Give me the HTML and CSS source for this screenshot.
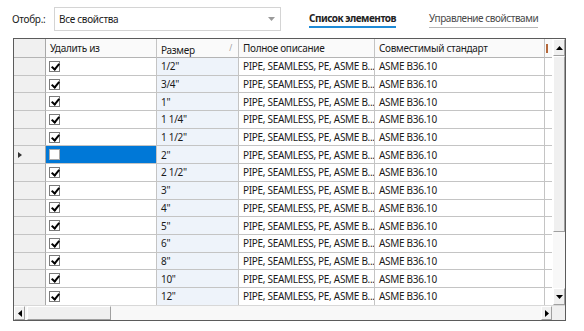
FILE: index.html
```html
<!DOCTYPE html>
<html lang="ru">
<head>
<meta charset="utf-8">
<link rel="stylesheet" href="styles.css">
</head>
<body>
<div class="top">
  <span class="lbl">Отобр.:</span>
  <div class="combo">
    <span>Все свойства</span>
    <svg class="drop" width="7" height="4" viewBox="0 0 7 4"><path d="M0 0h7L3.5 4z" fill="#9a9a9a"/></svg>
  </div>
  <nav class="tabs">
    <span class="tab active">Список элементов</span>
    <span class="tab">Управление свойствами</span>
  </nav>
</div>

<div class="grid">
  <div class="main">
    <div class="table">
      <div class="row head">
        <div class="c rh"></div>
        <div class="c">Удалить из</div>
        <div class="c size">Размер<span class="sort">/</span></div>
        <div class="c">Полное описание</div>
        <div class="c">Совместимый стандарт</div>
        <div class="c extra"><span class="mark"></span></div>
      </div>
      <div class="row"><div class="c rh"></div><div class="c"><span class="cb on"></span></div><div class="c size">1/2"</div><div class="c">PIPE, SEAMLESS, PE, ASME B...</div><div class="c">ASME B36.10</div><div class="c extra"></div></div>
      <div class="row"><div class="c rh"></div><div class="c"><span class="cb on"></span></div><div class="c size">3/4"</div><div class="c">PIPE, SEAMLESS, PE, ASME B...</div><div class="c">ASME B36.10</div><div class="c extra"></div></div>
      <div class="row"><div class="c rh"></div><div class="c"><span class="cb on"></span></div><div class="c size">1"</div><div class="c">PIPE, SEAMLESS, PE, ASME B...</div><div class="c">ASME B36.10</div><div class="c extra"></div></div>
      <div class="row"><div class="c rh"></div><div class="c"><span class="cb on"></span></div><div class="c size">1 1/4"</div><div class="c">PIPE, SEAMLESS, PE, ASME B...</div><div class="c">ASME B36.10</div><div class="c extra"></div></div>
      <div class="row"><div class="c rh"></div><div class="c"><span class="cb on"></span></div><div class="c size">1 1/2"</div><div class="c">PIPE, SEAMLESS, PE, ASME B...</div><div class="c">ASME B36.10</div><div class="c extra"></div></div>
      <div class="row"><div class="c rh"><span class="cur"></span></div><div class="c sel"><span class="cb"></span></div><div class="c size">2"</div><div class="c">PIPE, SEAMLESS, PE, ASME B...</div><div class="c">ASME B36.10</div><div class="c extra"></div></div>
      <div class="row"><div class="c rh"></div><div class="c"><span class="cb on"></span></div><div class="c size">2 1/2"</div><div class="c">PIPE, SEAMLESS, PE, ASME B...</div><div class="c">ASME B36.10</div><div class="c extra"></div></div>
      <div class="row"><div class="c rh"></div><div class="c"><span class="cb on"></span></div><div class="c size">3"</div><div class="c">PIPE, SEAMLESS, PE, ASME B...</div><div class="c">ASME B36.10</div><div class="c extra"></div></div>
      <div class="row"><div class="c rh"></div><div class="c"><span class="cb on"></span></div><div class="c size">4"</div><div class="c">PIPE, SEAMLESS, PE, ASME B...</div><div class="c">ASME B36.10</div><div class="c extra"></div></div>
      <div class="row"><div class="c rh"></div><div class="c"><span class="cb on"></span></div><div class="c size">5"</div><div class="c">PIPE, SEAMLESS, PE, ASME B...</div><div class="c">ASME B36.10</div><div class="c extra"></div></div>
      <div class="row"><div class="c rh"></div><div class="c"><span class="cb on"></span></div><div class="c size">6"</div><div class="c">PIPE, SEAMLESS, PE, ASME B...</div><div class="c">ASME B36.10</div><div class="c extra"></div></div>
      <div class="row"><div class="c rh"></div><div class="c"><span class="cb on"></span></div><div class="c size">8"</div><div class="c">PIPE, SEAMLESS, PE, ASME B...</div><div class="c">ASME B36.10</div><div class="c extra"></div></div>
      <div class="row"><div class="c rh"></div><div class="c"><span class="cb on"></span></div><div class="c size">10"</div><div class="c">PIPE, SEAMLESS, PE, ASME B...</div><div class="c">ASME B36.10</div><div class="c extra"></div></div>
      <div class="row"><div class="c rh"></div><div class="c"><span class="cb on"></span></div><div class="c size">12"</div><div class="c">PIPE, SEAMLESS, PE, ASME B...</div><div class="c">ASME B36.10</div><div class="c extra"></div></div>
    </div>
    <div class="vscroll">
      <div class="btn"><svg width="7" height="4" viewBox="0 0 7 4"><path d="M3.5 0L7 4H0z" fill="#000"/></svg></div>
      <div class="vtrack"><div class="vthumb"></div></div>
      <div class="btn"><svg width="7" height="4" viewBox="0 0 7 4"><path d="M0 0h7L3.5 4z" fill="#000"/></svg></div>
    </div>
  </div>
  <div class="hscroll">
    <div class="hbtn"><svg width="4" height="7" viewBox="0 0 4 7"><path d="M4 0v7L0 3.5z" fill="#000"/></svg></div>
    <div class="htrack"><div class="hthumb"></div></div>
    <div class="hbtn"><svg width="4" height="7" viewBox="0 0 4 7"><path d="M0 0v7l4-3.5z" fill="#000"/></svg></div>
    <div class="corner"></div>
  </div>
</div>
</body>
</html>
```

FILE: styles.css
```css
* { box-sizing: border-box; }
html, body { margin: 0; padding: 0; background: #fff; }
body {
  font-family: "Noto Sans", "Liberation Sans", sans-serif;
  font-size: 10px;
  letter-spacing: -0.3px;
  color: #1a1a1a;
  width: 584px;
  height: 331px;
  overflow: hidden;
}
.top {
  display: flex;
  align-items: center;
  height: 35px;
  padding: 3px 0 0 12px;
}
.lbl { width: 42px; }
.combo {
  width: 227px;
  height: 24px;
  border: 1px solid #d4d4d4;
  display: flex;
  align-items: center;
  justify-content: space-between;
  padding: 0 5px 0 4px;
}
.tabs {
  display: flex;
  margin-left: 28px;
  gap: 33px;
  padding-top: 1px;
}
.tab {
  color: #4a4a4a;
  border-bottom: 1px solid #b8b8b8;
  padding-bottom: 2px;
  line-height: 13px;
  letter-spacing: -0.45px;
}
.tab.active {
  color: #222;
  font-weight: bold;
  border-bottom: 2px solid #1e8ad6;
  padding-bottom: 1px;
  letter-spacing: -0.5px;
}
.grid {
  margin: 3px 0 0 13px;
  width: 553px;
  height: 283px;
  border: 1px solid #5b5b5b;
  display: flex;
  flex-direction: column;
}
.main {
  display: flex;
  height: 266px;
  overflow: hidden;
}
.table { width: 538px; overflow: hidden; }
.row {
  display: grid;
  grid-template-columns: 32px 111px 82px 136px 170px 7px;
  height: 17.7px;
}
.row.head { height: 19px; }
.c {
  border-right: 1px solid #c4c4c4;
  border-bottom: 1px solid #c4c4c4;
  padding-left: 4px;
  display: flex;
  align-items: center;
  white-space: nowrap;
  overflow: hidden;
}
.head .c { background: #fafafa; border-bottom-color: #b4b4b4; }
.rh { background: #f0f0f0; border-right-color: #a8a8a8; padding-left: 4px; }
.head .rh { background: #f0f0f0; }
.size { background: #eef3fa; }
.head .size { background: #fafafa; position: relative; padding-top: 3px; }
.sort { position: absolute; right: 6px; top: 3px; color: #9a9a9a; font-size: 8px; }
.extra { padding: 0; border-right: none; }
.head .extra { position: relative; }
.mark { position: absolute; left: 1px; top: 5px; width: 2px; height: 9px; background: #b5683a; }
.sel { background: #0078d7; }
.cb {
  width: 11px;
  height: 11px;
  border: 1px solid #7a7a7a;
  background: #fff;
  position: relative;
  margin-left: -1px;
}
.sel .cb { border-color: #a8a8a8; }
.cb.on::after {
  content: "";
  position: absolute;
  left: 2.5px;
  top: 0px;
  width: 3px;
  height: 6px;
  border-right: 2px solid #000;
  border-bottom: 2px solid #000;
  transform: rotate(40deg);
}
.cur {
  width: 0; height: 0;
  border-left: 4px solid #333;
  border-top: 3.5px solid transparent;
  border-bottom: 3.5px solid transparent;
}
.vscroll {
  width: 13px;
  background: #f0f0f0;
  border-left: 1px solid #fff;
  display: flex;
  flex-direction: column;
}
.btn {
  height: 17px;
  display: flex;
  align-items: center;
  justify-content: center;
  border: 1px solid #fff;
  border-right-color: #a0a0a0;
  border-bottom-color: #a0a0a0;
  background: #f0f0f0;
}
.vtrack { flex: 1; background: #f8f8f8; }
.vthumb {
  height: 176px;
  background: #f0f0f0;
  border: 1px solid #fff;
  border-right-color: #a0a0a0;
  border-bottom-color: #a0a0a0;
}
.hscroll {
  height: 15px;
  display: flex;
  border-top: 1px solid #d8d8d8;
  background: #f8f8f8;
}
.hbtn {
  width: 11px;
  display: flex;
  align-items: center;
  justify-content: center;
  background: #f0f0f0;
  border: 1px solid #fff;
  border-right-color: #a0a0a0;
  border-bottom-color: #a0a0a0;
}
.htrack { flex: 1; padding-left: 2px; display: flex; }
.hthumb {
  width: 84px;
  background: #f0f0f0;
  border: 1px solid #fff;
  border-right-color: #a0a0a0;
  border-bottom-color: #a0a0a0;
}
.corner { width: 13px; background: #f0f0f0; }
```
